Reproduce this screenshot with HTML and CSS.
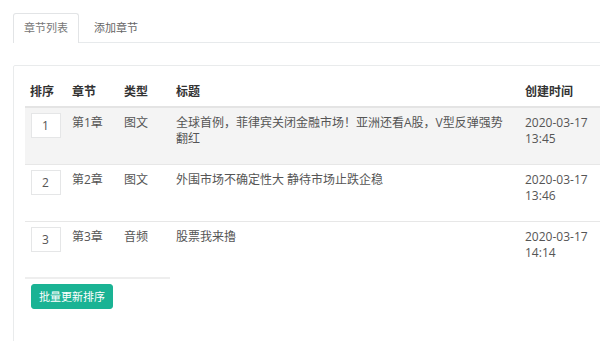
FILE: index.html
```html
<!DOCTYPE html>
<html lang="zh-CN">
<head>
<meta charset="utf-8">
<title>章节列表</title>
<link rel="stylesheet" href="styles.css">
</head>
<body>
<div class="tabs">
  <div class="tab active">章节列表</div>
  <div class="tab">添加章节</div>
</div>
<div class="panel">
  <div class="row head">
    <div class="cell first">排序</div>
    <div class="cell">章节</div>
    <div class="cell">类型</div>
    <div class="cell">标题</div>
    <div class="cell">创建时间</div>
    <div class="cell"></div>
  </div>
  <div class="row striped">
    <div class="cell first sort"><input class="num" type="text" value="1"></div>
    <div class="cell">第1章</div>
    <div class="cell">图文</div>
    <div class="cell title">全球首例，菲律宾关闭金融市场！亚洲还看A股，V型反弹强势翻红</div>
    <div class="cell">2020-03-17 13:45</div>
    <div class="cell"></div>
  </div>
  <div class="row">
    <div class="cell first sort"><input class="num" type="text" value="2"></div>
    <div class="cell">第2章</div>
    <div class="cell">图文</div>
    <div class="cell title">外围市场不确定性大 静待市场止跌企稳</div>
    <div class="cell">2020-03-17 13:46</div>
    <div class="cell"></div>
  </div>
  <div class="row last">
    <div class="cell first sort"><input class="num" type="text" value="3"></div>
    <div class="cell">第3章</div>
    <div class="cell">音频</div>
    <div class="cell title">股票我来擼</div>
    <div class="cell">2020-03-17 14:14</div>
    <div class="cell"></div>
  </div>
  <div class="foot-line"></div>
  <button class="btn" type="button">批量更新排序</button>
</div>
</body>
</html>
```

FILE: styles.css
```css
html, body {
  overflow: hidden;
}
body {
  margin: 0;
  padding: 13px;
  width: 700px;
  font-family: "Open Sans", "Noto Sans CJK SC", sans-serif;
  font-size: 12px;
  color: #555;
  background: #fff;
}
.tabs {
  display: flex;
  gap: 4px;
  border-bottom: 1px solid #e7eaec;
  height: 29px;
}
.tab {
  height: 28px;
  line-height: 28px;
  padding: 0 10px;
  font-size: 11px;
  color: #666;
  border: 1px solid transparent;
  border-bottom: none;
  border-radius: 3px 3px 0 0;
  background: #fff;
}
.tab.active {
  border-color: #e2e4e6;
  height: 29px;
  color: #777;
}
.panel {
  margin-top: 22px;
  border: 1px solid #e9ebec;
  border-radius: 2px;
  padding: 11px 11px 40px 11px;
  width: 660px;
}
.row {
  display: grid;
  grid-template-columns: 42px 52px 52px 349px 80px 1fr;
  height: 56px;
  border-bottom: 1px solid #e7e7e7;
  line-height: 16px;
}
.row.head {
  height: 29px;
  border-bottom: 2px solid #e4e4e4;
  font-weight: bold;
  color: #333;
}
.row.striped {
  background: #f4f4f4;
}
.row.last {
  height: 55px;
  border-bottom: none;
}
.cell {
  padding: 7px 5px 0 5px;
}
.cell.title {
  padding-right: 16px;
}
.cell.first {
  padding-left: 6px;
  padding-right: 0;
}
.head .cell.first {
  padding-left: 5px;
}
.cell.sort {
  padding-top: 5px;
}
.num {
  box-sizing: border-box;
  width: 30px;
  height: 25px;
  margin: 0;
  padding: 0 0 0 10px;
  border: 1px solid #e5e6e7;
  background: #fff;
  font-family: "Open Sans", sans-serif;
  font-size: 12px;
  color: #555;
  outline: none;
}
.foot-line {
  width: 145px;
  border-top: 2px solid #eeeeee;
}
.btn {
  display: block;
  margin: 5px 0 0 6px;
  height: 25px;
  padding: 0 7px;
  border: 1px solid #1ab394;
  border-radius: 3px;
  background: #1ab394;
  color: #fff;
  font-family: "Open Sans", "Noto Sans CJK SC", sans-serif;
  font-size: 11px;
  line-height: 23px;
}
```
